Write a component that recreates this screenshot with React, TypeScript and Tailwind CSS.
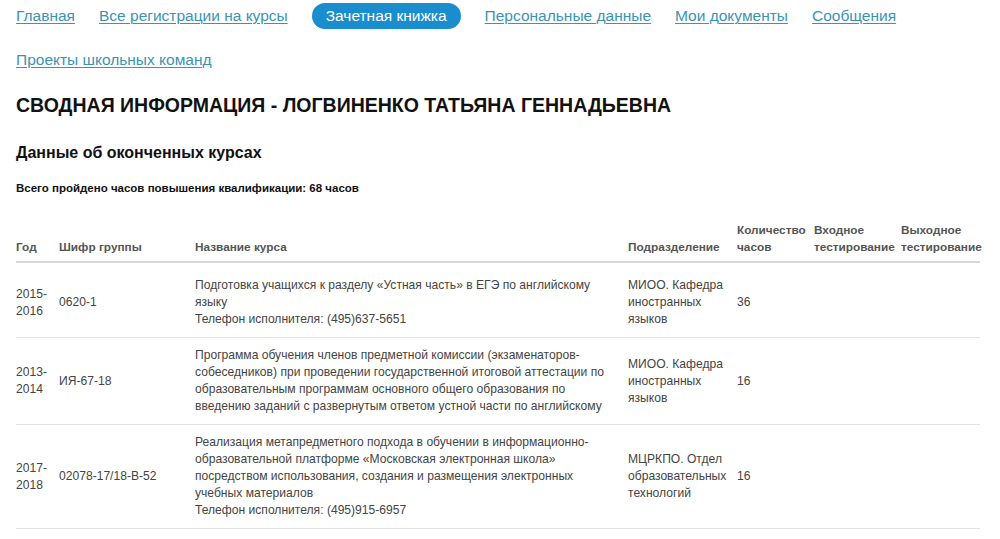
import React from "react";

const navLinks = ["Главная", "Все регистрации на курсы"];
const navLinksAfter = ["Персональные данные", "Мои документы", "Сообщения"];

const rows = [
    {
        year: ["2015-", "2016"],
        code: "0620-1",
        name: "Подготовка учащихся к разделу «Устная часть» в ЕГЭ по английскому языку",
        phone: "Телефон исполнителя: (495)637-5651",
        dept: "МИОО. Кафедра иностранных языков",
        hours: "36",
    },
    {
        year: ["2013-", "2014"],
        code: "ИЯ-67-18",
        name: "Программа обучения членов предметной комиссии (экзаменаторов-собеседников) при проведении государственной итоговой аттестации по образовательным программам основного общего образования по введению заданий с развернутым ответом устной части по английскому",
        phone: "",
        dept: "МИОО. Кафедра иностранных языков",
        hours: "16",
    },
    {
        year: ["2017-", "2018"],
        code: "02078-17/18-В-52",
        name: "Реализация метапредметного подхода в обучении в информационно-образовательной платформе «Московская электронная школа» посредством использования, создания и размещения электронных учебных материалов",
        phone: "Телефон исполнителя: (495)915-6957",
        dept: "МЦРКПО. Отдел образовательных технологий",
        hours: "16",
    },
];

export default function App() {
    return (
        <div className="min-h-screen bg-white text-[#333] px-4 font-['Liberation_Sans','Noto_Sans',sans-serif]">
            <nav className="flex flex-wrap items-center gap-x-6 pt-[3px] text-[15.5px] leading-[26px]">
                {navLinks.map((l) => (
                    <a key={l} href="#" className="text-[#3a94b4] underline underline-offset-2 decoration-1">
                        {l}
                    </a>
                ))}
                <span className="bg-[#1a8dcf] text-white rounded-full px-[14px] h-[26px] flex items-center">
                    Зачетная книжка
                </span>
                {navLinksAfter.map((l) => (
                    <a key={l} href="#" className="text-[#3a94b4] underline underline-offset-2 decoration-1">
                        {l}
                    </a>
                ))}
            </nav>
            <div className="mt-[18px] text-[15.5px] leading-[26px]">
                <a href="#" className="text-[#3a94b4] underline underline-offset-2 decoration-1">
                    Проекты школьных команд
                </a>
            </div>

            <h1 className="mt-[18px] text-[19.5px] font-bold text-[#111] leading-[28px]">
                СВОДНАЯ ИНФОРМАЦИЯ - ЛОГВИНЕНКО ТАТЬЯНА ГЕННАДЬЕВНА
            </h1>

            <h2 className="mt-[23px] text-[16px] font-bold text-[#111] leading-[22px]">
                Данные об оконченных курсах
            </h2>

            <p className="mt-[16px] text-[11.5px] font-bold text-[#111] leading-[16px]">
                Всего пройдено часов повышения квалификации: 68 часов
            </p>

            <table className="mt-[26px] w-[964px] table-fixed border-collapse text-[12.1px] leading-[17px]">
                <colgroup>
                    <col className="w-[43px]" />
                    <col className="w-[136px]" />
                    <col className="w-[433px]" />
                    <col className="w-[109px]" />
                    <col className="w-[77px]" />
                    <col className="w-[87px]" />
                    <col className="w-[79px]" />
                </colgroup>
                <thead>
                    <tr className="border-b-2 border-[#d8d8d8] text-[#555] text-left align-bottom text-[11.8px]">
                        <th className="pb-[5px] font-bold">Год</th>
                        <th className="pb-[5px] font-bold">Шифр группы</th>
                        <th className="pb-[5px] font-bold">Название курса</th>
                        <th className="pb-[5px] font-bold">Подразделение</th>
                        <th className="pb-[5px] font-bold">Количество часов</th>
                        <th className="pb-[5px] font-bold">Входное тестирование</th>
                        <th className="pb-[5px] font-bold">Выходное тестирование</th>
                    </tr>
                </thead>
                <tbody>
                    {rows.map((r, i) => {
                        const pad = i === 0 ? "pt-[14px] pb-[9px]" : "py-[9px]";
                        return (
                            <tr key={i} className="border-b border-[#e2e2e2] align-middle text-[#444]">
                                <td className={pad}>
                                    {r.year[0]}
                                    <br />
                                    {r.year[1]}
                                </td>
                                <td className={pad}>{r.code}</td>
                                <td className={`${pad} pr-[10px]`}>
                                    {r.name}
                                    {r.phone && (
                                        <>
                                            <br />
                                            {r.phone}
                                        </>
                                    )}
                                </td>
                                <td className={`${pad} pr-2`}>{r.dept}</td>
                                <td className={pad}>{r.hours}</td>
                                <td className={pad}></td>
                                <td className={pad}></td>
                            </tr>
                        );
                    })}
                </tbody>
            </table>
        </div>
    );
}
